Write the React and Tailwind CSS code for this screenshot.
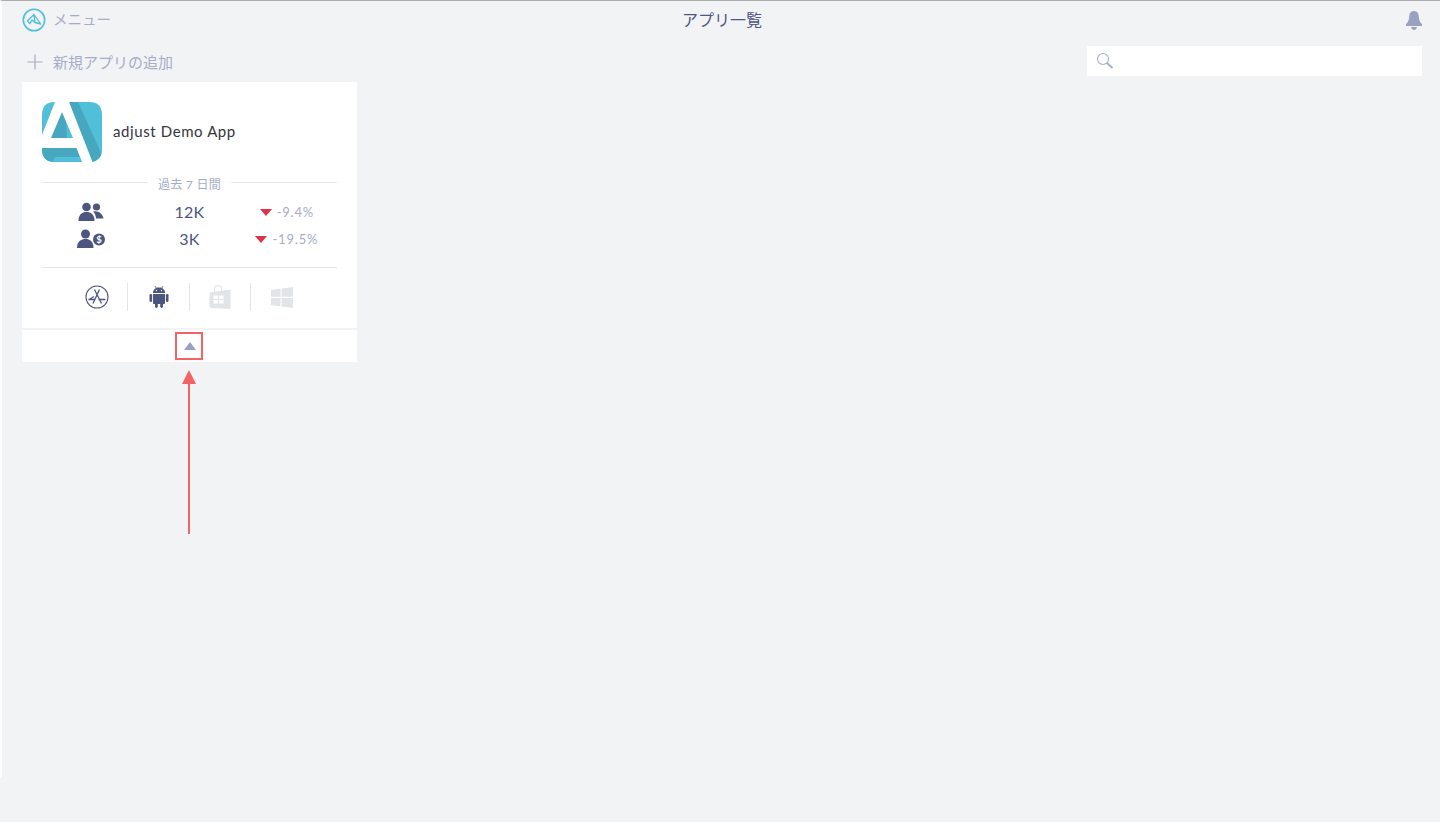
const FONT = 'font-["Lato","Noto_Sans_CJK_JP",sans-serif]'

const stats = [
  { icon: 'users', value: '12K', delta: '-9.4%' },
  { icon: 'revenue', value: '3K', delta: '-19.5%' },
]

function MenuLogo() {
  return (
    <svg width="24" height="24" viewBox="0 0 24 24" fill="none" stroke="#4cc0da">
      <circle cx="12" cy="12" r="10.7" strokeWidth="1.6" />
      <path d="M5.3 13 L12 6.5 L18.7 16 L13 14.5 L12 7 M5.3 13 L8 15.5 L10 12 L13 14.5" strokeWidth="1.3" strokeLinejoin="round" />
    </svg>
  )
}

function AppLogo() {
  return (
    <svg width="60" height="60" viewBox="0 0 60 60" className="block">
      <defs>
        <clipPath id="logo-clip">
          <path d="M13 0 H47 Q60 0 60 13 V47 Q60 60 47 60 H13 Q0 60 0 47 V13 Q0 0 13 0 Z" />
        </clipPath>
      </defs>
      <g clipPath="url(#logo-clip)">
        <rect width="60" height="60" fill="#50bfda" />
        <path d="M27 0 H36 L60 53 L52 60 H50 Z" fill="#46a7bf" />
        <path d="M0 46 H35 L40 60 H0 Z" fill="#46a7bf" />
        <path d="M10 60 L13 55 H38 L40 60 Z" fill="#50bfda" />
        <path d="M20 10 L9 36 H31 Z" fill="#46a7bf" />
        <path d="M24 19 L31 36 H25 Z" fill="#50bfda" />
        <path fillRule="evenodd" d="M13 0 H27 L50.5 60 H40 L34.5 46 H0 V33 Z M20 10 L9 36 H31 Z" fill="#fff" />
      </g>
    </svg>
  )
}

function UsersIcon() {
  return (
    <svg width="26" height="20" viewBox="0 0 26 20" fill="#4c5681">
      <circle cx="8.5" cy="5" r="4.3" />
      <path d="M0.5 19 C0.5 12.5 4 10 8.5 10 C13 10 16.5 12.5 16.5 19 Z" />
      <circle cx="18.5" cy="5" r="3.6" />
      <path d="M15 9.6 C20 8.5 24.5 11.5 25.5 16.5 H18 C17.8 13.5 16.8 11.2 15 9.6 Z" />
    </svg>
  )
}

function RevenueIcon() {
  return (
    <svg width="28" height="20" viewBox="0 0 28 20" fill="#4c5681">
      <circle cx="8.5" cy="5" r="4.5" />
      <path d="M0 19 C0 12.5 4 10 8.5 10 C13 10 16.5 12.5 16.5 19 Z" />
      <circle cx="22" cy="10.5" r="6" />
      <text x="22" y="13.8" textAnchor="middle" fontSize="9.5" fontWeight="700" fill="#fff" fontFamily="Lato, sans-serif">$</text>
    </svg>
  )
}

function AppStoreIcon() {
  return (
    <svg width="24" height="24" viewBox="0 0 24 24" fill="none" stroke="#4c5681">
      <circle cx="12" cy="12" r="11" strokeWidth="1.1" />
      <path d="M14.5 4.5 L8 18.5 M9.5 4.5 L16.5 18.5 M3.5 15 L9 11.5 M3.5 14.5 H9.5 M13.5 14.5 H20.5" strokeWidth="1.3" />
    </svg>
  )
}

function AndroidIcon() {
  return (
    <svg width="20" height="22" viewBox="0 0 20 22" fill="#4c5681">
      <path d="M4 7 C4 3.5 6.5 1.5 10 1.5 C13.5 1.5 16 3.5 16 7 Z" />
      <path d="M6 0 L7.5 2.5 M14 0 L12.5 2.5" stroke="#4c5681" strokeWidth="0.8" />
      <circle cx="7.5" cy="4.5" r="0.7" fill="#fff" />
      <circle cx="12.5" cy="4.5" r="0.7" fill="#fff" />
      <path d="M4 8 H16 V17 Q16 18 15 18 H5 Q4 18 4 17 Z" />
      <rect x="0.5" y="8" width="2.6" height="8" rx="1.3" />
      <rect x="16.9" y="8" width="2.6" height="8" rx="1.3" />
      <rect x="6" y="16" width="2.8" height="6" rx="1.4" />
      <rect x="11.2" y="16" width="2.8" height="6" rx="1.4" />
    </svg>
  )
}

function WindowsStoreIcon() {
  return (
    <svg width="22" height="24" viewBox="0 0 22 24" fill="#e1e5e8">
      <path d="M5 7 V3.5 C5 1 7 0 9 0 C11.5 0 13 1.5 13 3.5 V6 H12 V3.5 C12 2 10.5 1 9 1 C7.5 1 6 2 6 3.5 V7 Z" />
      <path d="M0.5 7.5 L21.5 4.5 V24 L3 23 Q0.5 23 0.5 21 Z" />
      <path d="M4.5 10.5 H9 V14 H4.5 Z M10 10.5 H14.5 V14 H10 Z M4.5 15 H9 V18.5 H4.5 Z M10 15 H14.5 V18.5 H10 Z" fill="#fff" />
    </svg>
  )
}

function WindowsIcon() {
  return (
    <svg width="22" height="21" viewBox="0 0 22 21" fill="#e1e5e8">
      <path d="M0 3 L9.5 1.6 V9.8 H0 Z M10.5 1.4 L22 0 V9.8 H10.5 Z M0 11 H9.5 V19.4 L0 18 Z M10.5 11 H22 V21 L10.5 19.6 Z" />
    </svg>
  )
}

function BellIcon() {
  return (
    <svg width="16" height="19" viewBox="0 0 16 19" fill="#98a1bf">
      <path d="M8 0 C11.5 0 12.6 2.8 12.8 5.5 C13 9 13.6 11 16 13.3 V15 H0 V13.3 C2.4 11 3 9 3.2 5.5 C3.4 2.8 4.5 0 8 0 Z" />
      <path d="M5 16 H11 C10.6 18 9.4 19 8 19 C6.6 19 5.4 18 5 16 Z" />
    </svg>
  )
}

function PlusIcon() {
  return (
    <svg width="16" height="16" viewBox="0 0 16 16" stroke="#a6adc8" strokeWidth="1.2">
      <path d="M8 0.5 V15.5 M0.5 8 H15.5" />
    </svg>
  )
}

function SearchIcon() {
  return (
    <svg width="18" height="18" viewBox="0 0 18 18" fill="none" stroke="#a6adc8">
      <circle cx="7" cy="7" r="5.5" strokeWidth="1.1" />
      <path d="M11 11 L16.5 16" strokeWidth="1.8" />
    </svg>
  )
}

function Triangle() {
  return <span className="block h-0 w-0 border-x-[6.5px] border-t-[7px] border-x-transparent border-t-[#e0304a]" />
}

export default function App() {
  return (
    <div className={`relative h-[822px] overflow-hidden bg-[#f2f3f5] ${FONT}`}>
      <div className="h-[778px] border-l-2 border-t border-l-white border-t-[#b0adb1]">
        {/* Top bar */}
        <header className="relative flex h-[38px] items-center justify-between pl-5 pr-[18px]">
          <div className="flex items-center gap-[7px]">
            <MenuLogo />
            <span className="text-[14.5px] text-[#a6adc8]">メニュー</span>
          </div>
          <h1 className="absolute left-[680px] top-[9px] text-base font-normal leading-5 text-[#4c5681]">アプリ一覧</h1>
          <BellIcon />
        </header>

        {/* Toolbar */}
        <div className="mt-[7px] flex h-[30px] items-center justify-between pl-[25px] pr-[18px]">
          <button className="flex items-center gap-[10px] pt-[2px] text-[15px] text-[#a6adc8]">
            <PlusIcon />
            新規アプリの追加
          </button>
          <div className="flex h-[30px] w-[335px] items-center bg-white pl-[9px]">
            <SearchIcon />
          </div>
        </div>

        {/* App card */}
        <div className="ml-5 mt-[6px] w-[335px] bg-white">
          <div className="px-5 pt-5">
            <div className="flex items-center gap-[11px]">
              <AppLogo />
              <span className="pb-[2px] text-[15px] tracking-[0.6px] text-[#33353d]">adjust Demo App</span>
            </div>

            <div className="mt-[15px] flex items-center gap-[10px]">
              <div className="mb-[6px] h-px flex-1 bg-[#e3e5e9]" />
              <span className="text-xs leading-4 tracking-[0.3px] text-[#a6adc8]">過去 7 日間</span>
              <div className="mb-[6px] h-px flex-1 bg-[#e3e5e9]" />
            </div>

            <div className="mt-[7px] flex flex-col gap-[7px] border-b border-[#e3e5e9] pb-[20px]">
              {stats.map(s => (
                <div key={s.value} className="grid h-5 grid-cols-3 items-center">
                  <div className="flex justify-center">
                    {s.icon === 'users' ? <UsersIcon /> : <RevenueIcon />}
                  </div>
                  <div className="text-center text-base tracking-[0.3px] text-[#4c5681]">{s.value}</div>
                  <div className="flex items-center justify-center gap-[5px] pr-[2px]">
                    <Triangle />
                    <span className="pt-[1px] text-[13px] tracking-[0.8px] text-[#a6adc8]">{s.delta}</span>
                  </div>
                </div>
              ))}
            </div>

            <div className="flex h-[60px] items-center justify-center pb-[2px]">
              <div className="flex h-7 w-[62px] items-center justify-center border-r border-[#e1e5e8]"><AppStoreIcon /></div>
              <div className="flex h-7 w-[62px] items-center justify-center border-r border-[#e1e5e8]"><AndroidIcon /></div>
              <div className="flex h-7 w-[61px] items-center justify-center border-r border-[#e1e5e8]"><WindowsStoreIcon /></div>
              <div className="flex h-7 w-[62px] items-center justify-center"><WindowsIcon /></div>
            </div>
          </div>

          <div className="flex h-[34px] items-center justify-center border-t-2 border-[#f2f3f5]">
            <span className="block h-0 w-0 border-x-[6.5px] border-b-[8px] border-x-transparent border-b-[#98a1bf]" />
          </div>
        </div>
      </div>

      {/* Annotation */}
      <div className="absolute left-[175px] top-[332px] h-[28px] w-[28px] border-2 border-[#f26464]" />
      <div className="absolute left-[182px] top-[370px] flex flex-col items-center">
        <span className="block h-0 w-0 border-x-[7px] border-b-[14px] border-x-transparent border-b-[#f26464]" />
        <span className="block h-[150px] w-[2px] bg-[#f26464]" />
      </div>
    </div>
  )
}
